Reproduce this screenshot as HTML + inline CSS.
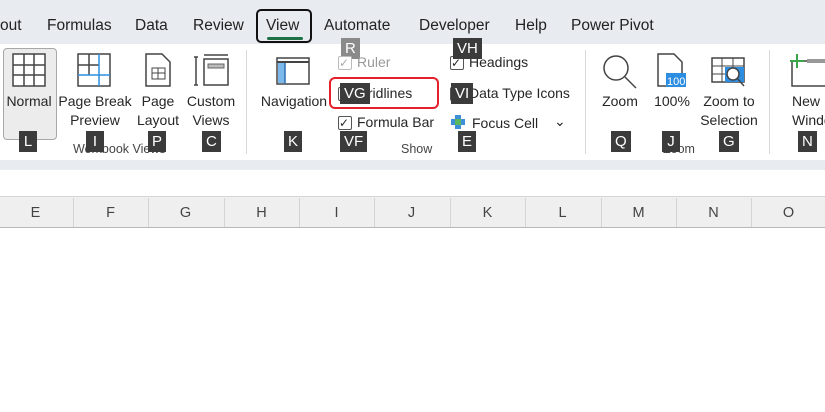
<!DOCTYPE html><html><head><style>
body{margin:0;width:825px;height:412px;overflow:hidden;background:#fff;font-family:"Liberation Sans",sans-serif;position:relative;color:#262626}
.a{position:absolute}
.tab{position:absolute;top:17px;font-size:15.5px;color:#222}
.lbl{position:absolute;font-size:14px;text-align:center;line-height:19px;color:#262626;white-space:nowrap}
.k{position:absolute;background:#3b3b3b;color:#fff;font-size:15px;height:21px;line-height:21px;text-align:center;padding:0 4px;min-width:10px}
.grp{position:absolute;top:142px;font-size:12.5px;color:#444}
.cb{position:absolute;width:12px;height:12px;border:1px solid #555;border-radius:2px;background:#fff}
.ck{position:absolute;font-size:12px;line-height:14px}
.col{position:absolute;top:205px;font-size:14.5px;color:#444;width:75px;text-align:center}
.div{position:absolute;top:198px;width:1px;height:29px;background:#d4d4d4}
</style></head><body>
<div class="a" style="left:0;top:0;width:825px;height:44px;background:#e8ebf0"></div>
<div class="tab" style="left:0">out</div>
<div class="tab" style="left:47px">Formulas</div>
<div class="tab" style="left:135px">Data</div>
<div class="tab" style="left:193px">Review</div>
<div class="a" style="left:256px;top:9px;width:56px;height:34px;border:2px solid #111;border-radius:5px;box-sizing:border-box"></div>
<div class="tab" style="left:266px">View</div>
<div class="a" style="left:267px;top:37px;width:36px;height:3px;background:#1e7145;border-radius:2px"></div>
<div class="tab" style="left:324px">Automate</div>
<div class="tab" style="left:419px">Developer</div>
<div class="tab" style="left:515px">Help</div>
<div class="tab" style="left:571px">Power Pivot</div>
<div class="a" style="left:0;top:44px;width:825px;height:116px;background:#fff;box-shadow:0 2px 3px rgba(0,0,0,.15)"></div>
<div class="a" style="left:0;top:160px;width:825px;height:10px;background:#e8ebf0"></div>
<div class="a" style="left:0;top:196px;width:825px;height:32px;background:#efefef;border-top:1px solid #d6d6d6;border-bottom:1px solid #b8b8b8;box-sizing:border-box"></div>
<div class="a" style="left:3px;top:48px;width:52px;height:90px;background:#ececec;border:1px solid #a8a8a8;border-radius:4px"></div>
<svg class="a" style="left:12px;top:53px" width="34" height="34"><rect x="1" y="1" width="32" height="32" fill="#fff" stroke="#444" stroke-width="1.5"/><path d="M12 1V33M22 1V33M1 12H33M1 22H33" stroke="#444" stroke-width="1.5"/></svg>
<div class="lbl" style="left:0;top:92px;width:58px">Normal</div>
<svg class="a" style="left:77px;top:53px" width="34" height="34"><rect x="1" y="1" width="32" height="32" fill="#fff" stroke="#444" stroke-width="1.5"/><path d="M12 1V22M1 12H22" stroke="#444" stroke-width="1.5"/><path d="M22 1V33M1 22H33" stroke="#2d8de0" stroke-width="1.5"/></svg>
<div class="lbl" style="left:58px;top:92px;width:74px">Page Break<br>Preview</div>
<svg class="a" style="left:144px;top:53px" width="28" height="34"><path d="M2 1H18L26 9V33H2Z" fill="#fff" stroke="#444" stroke-width="1.5"/><rect x="8" y="15" width="13" height="11" fill="none" stroke="#444"/><path d="M8 20H21M14 15V26" stroke="#444"/></svg>
<div class="lbl" style="left:132px;top:92px;width:52px">Page<br>Layout</div>
<svg class="a" style="left:194px;top:53px" width="36" height="34"><path d="M2 4V32M0 4H4M0 32H4M10 2H34" stroke="#444" stroke-width="1.5"/><rect x="10" y="6" width="24" height="26" fill="#fff" stroke="#444" stroke-width="1.5"/><rect x="14" y="11" width="16" height="4" fill="#bbb" stroke="#666"/></svg>
<div class="lbl" style="left:182px;top:92px;width:58px">Custom<br>Views</div>
<div class="grp" style="left:73px">Workbook Views</div>
<div class="a" style="left:246px;top:50px;width:1px;height:104px;background:#d8d8d8"></div>
<svg class="a" style="left:276px;top:57px" width="34" height="28"><rect x="1" y="1" width="32" height="26" fill="#fff" stroke="#444" stroke-width="1.5"/><path d="M1 5H33" stroke="#444" stroke-width="2"/><rect x="2" y="6" width="7" height="20" fill="#7cb8ea"/><path d="M9 6V27" stroke="#2d6fb4" stroke-width="1.5"/></svg>
<div class="lbl" style="left:258px;top:92px;width:72px">Navigation</div>
<div class="k" style="left:341px;top:38px;background:#8a8a8a">R</div>
<div class="cb" style="left:338px;top:56px;border-color:#bbb"></div><div class="ck" style="left:339px;top:56px;color:#aaa">&#10003;</div><div class="lbl" style="left:357px;top:53px;color:#999">Ruler</div>
<div class="a" style="left:329px;top:77px;width:110px;height:32px;border:2px solid #e6202a;border-radius:6px;box-sizing:border-box"></div>
<div class="cb" style="left:338px;top:87px"></div><div class="lbl" style="left:357px;top:84px">Gridlines</div>
<div class="k" style="left:340px;top:83px">VG</div>
<div class="cb" style="left:338px;top:116px"></div><div class="ck" style="left:339px;top:116px">&#10003;</div><div class="lbl" style="left:357px;top:113px">Formula Bar</div>
<div class="cb" style="left:450px;top:56px"></div><div class="ck" style="left:451px;top:56px">&#10003;</div><div class="lbl" style="left:469px;top:53px">Headings</div>
<div class="k" style="left:453px;top:38px">VH</div>
<div class="cb" style="left:450px;top:87px"></div><div class="lbl" style="left:469px;top:84px">Data Type Icons</div>
<div class="k" style="left:451px;top:83px">VI</div>
<svg class="a" style="left:450px;top:114px" width="16" height="16"><path d="M5 1H11V5H15V11H11V15H5V11H1V5H5Z" fill="#3c8fd8"/><rect x="5" y="5" width="6" height="6" fill="#5cb85c"/></svg>
<div class="lbl" style="left:472px;top:114px">Focus Cell</div>
<div class="lbl" style="left:554px;top:112px">&#8964;</div>
<div class="grp" style="left:401px">Show</div>
<div class="a" style="left:585px;top:50px;width:1px;height:104px;background:#d8d8d8"></div>
<svg class="a" style="left:600px;top:53px" width="38" height="36"><circle cx="16" cy="15" r="12" fill="none" stroke="#444" stroke-width="1.5"/><path d="M25 24L36 35" stroke="#444" stroke-width="1.5"/></svg>
<div class="lbl" style="left:596px;top:92px;width:48px">Zoom</div>
<svg class="a" style="left:656px;top:53px" width="36" height="36"><path d="M2 1H18L26 9V33H2Z" fill="#fff" stroke="#444" stroke-width="1.5"/><rect x="10" y="20" width="20" height="14" fill="#2d8de0"/><text x="11" y="32" font-size="11" fill="#fff" font-family="Liberation Sans">100</text></svg>
<div class="lbl" style="left:650px;top:92px;width:44px">100%</div>
<svg class="a" style="left:711px;top:57px" width="40" height="34"><rect x="1" y="1" width="32" height="24" fill="#fff" stroke="#444" stroke-width="1.5"/><path d="M1 9H33M1 17H33M11 1V25M22 1V25" stroke="#444"/><rect x="14" y="10" width="19" height="15" fill="#2d8de0"/><circle cx="22" cy="17" r="6" fill="#fff" stroke="#444" stroke-width="1.5"/><path d="M26 21L33 29" stroke="#444" stroke-width="1.5"/></svg>
<div class="lbl" style="left:696px;top:92px;width:66px">Zoom to<br>Selection</div>
<div class="grp" style="left:663px">Zoom</div>
<div class="a" style="left:769px;top:50px;width:1px;height:104px;background:#d8d8d8"></div>
<svg class="a" style="left:788px;top:53px" width="40" height="34"><rect x="4" y="8" width="34" height="25" fill="#fff" stroke="#444" stroke-width="1.5"/><path d="M9 1V15M2 8H16" stroke="#3aa64a" stroke-width="2"/><rect x="19" y="6" width="20" height="4" fill="#999"/></svg>
<div class="lbl" style="left:792px;top:92px;text-align:left">New<br>Window</div>
<div class="k" style="left:19px;top:131px">L</div>
<div class="k" style="left:86px;top:131px">I</div>
<div class="k" style="left:148px;top:131px">P</div>
<div class="k" style="left:202px;top:131px">C</div>
<div class="k" style="left:284px;top:131px">K</div>
<div class="k" style="left:340px;top:131px">VF</div>
<div class="k" style="left:458px;top:131px">E</div>
<div class="k" style="left:611px;top:131px">Q</div>
<div class="k" style="left:662px;top:131px">J</div>
<div class="k" style="left:719px;top:131px">G</div>
<div class="k" style="left:798px;top:131px">N</div>
<div class="col" style="left:-2px">E</div><div class="div" style="left:73px"></div>
<div class="col" style="left:73px">F</div><div class="div" style="left:148px"></div>
<div class="col" style="left:148px">G</div><div class="div" style="left:224px"></div>
<div class="col" style="left:224px">H</div><div class="div" style="left:299px"></div>
<div class="col" style="left:299px">I</div><div class="div" style="left:374px"></div>
<div class="col" style="left:374px">J</div><div class="div" style="left:450px"></div>
<div class="col" style="left:450px">K</div><div class="div" style="left:525px"></div>
<div class="col" style="left:525px">L</div><div class="div" style="left:601px"></div>
<div class="col" style="left:601px">M</div><div class="div" style="left:676px"></div>
<div class="col" style="left:676px">N</div><div class="div" style="left:751px"></div>
<div class="col" style="left:751px">O</div>
</body></html>
